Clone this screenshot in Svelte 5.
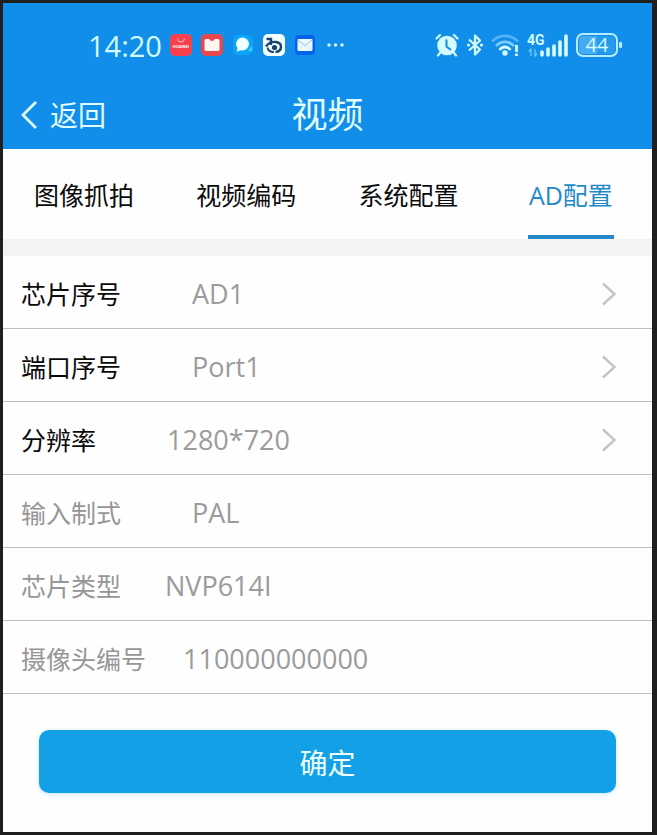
<script>
  const tabs = ['图像抓拍', '视频编码', '系统配置', 'AD配置'];
  let active = $state('AD配置');

  const pickers = [
    { label: '芯片序号', value: 'AD1', gap: 'wide' },
    { label: '端口序号', value: 'Port1', gap: 'wide' },
    { label: '分辨率', value: '1280*720', gap: 'wide' },
  ];
  const fields = [
    { id: 'format', label: '输入制式', value: 'PAL', gap: 'wide' },
    { id: 'chip', label: '芯片类型', value: 'NVP614I', gap: 'medium' },
    { id: 'camera', label: '摄像头编号', value: '110000000000', gap: 'narrow' },
  ];
</script>

<div class="frame">
  <div class="screen">
    <header>
      <div class="status">
        <div class="group left">
          <span class="time">14:20</span>
          <div class="apps">
            <svg viewBox="0 0 22 22" aria-hidden="true">
              <rect width="22" height="22" rx="5" fill="#f8404c" />
              <path d="M7.5 4.5a3.5 3.5 0 0 0 7 0" fill="none" stroke="#ffc0c0" stroke-width="1" />
              <text x="11" y="13.5" text-anchor="middle" class="brand">HUAWEI</text>
            </svg>
            <svg viewBox="0 0 22 22" aria-hidden="true">
              <rect width="22" height="22" rx="5" fill="#e9474f" />
              <path d="M3.500 6.500Q3.500 5 5 5H8.200Q9 7 11 7T13.800 5H17Q18.500 5 18.500 6.500V15.500Q18.500 17 17 17H5Q3.500 17 3.500 15.500Z" fill="#fff6f2" />
            </svg>
            <svg viewBox="0 0 22 22" aria-hidden="true">
              <rect x="1" y="1" width="20" height="20" rx="5" fill="#0aa4f8" />
              <path d="M16 17l4-5v5z" fill="#48cdfc" />
              <circle cx="10.500" cy="10" r="6.500" fill="#f0ffff" />
              <path d="M6 13l-1.500 4.500 5-1.500z" fill="#f0ffff" />
            </svg>
            <svg viewBox="0 0 22 22" aria-hidden="true">
              <rect width="22" height="22" rx="5" fill="#f5ffff" />
              <path d="M3.500 5h4.500v6" fill="none" stroke="#174570" stroke-width="2.400" />
              <path d="M3 12.500C5 9.500 9 7.500 13 8C20 9 19.500 17.500 12.500 18" fill="none" stroke="#174570" stroke-width="2.400" />
              <path d="M4.500 13.500C5 16.500 7.500 18 11 18" fill="none" stroke="#174570" stroke-width="1.800" />
              <circle cx="11.500" cy="13.500" r="2.600" fill="#174570" />
            </svg>
            <svg viewBox="0 0 22 22" aria-hidden="true">
              <rect x="1" y="1" width="20" height="20" rx="4" fill="#0562ec" />
              <rect x="3.500" y="5" width="15" height="12" rx="1" fill="#ebfaff" />
              <path d="M4 6l7 5.500 7-5.500" fill="none" stroke="#8fc2ee" stroke-width="1" />
              <path d="M4.500 16.500l4-5M17.500 16.500l-4-5" fill="none" stroke="#c8e4f8" stroke-width="0.800" />
            </svg>
            <svg viewBox="0 0 22 22" aria-hidden="true" fill="#d4faff">
              <circle cx="4" cy="11" r="1.700" /><circle cx="10.500" cy="11" r="1.700" /><circle cx="17" cy="11" r="1.700" />
            </svg>
          </div>
        </div>
        <div class="group right">
          <svg width="24" height="24" viewBox="0 0 24 24" aria-label="闹钟" role="img">
            <circle cx="12" cy="12.500" r="9.800" fill="#d4fbff" />
            <path d="M1.500 5.500L5 2M22.500 5.500L19 2M5 20l-2 2.500M19 20l2 2.500" stroke="#d4fbff" stroke-width="2.200" stroke-linecap="round" />
            <path d="M11.500 6.500v7l4.500 3.500" fill="none" stroke="#118bea" stroke-width="2" />
          </svg>
          <svg width="18" height="24" viewBox="0 0 18 24" aria-label="蓝牙" role="img" fill="none" stroke="#d4fbff" stroke-width="2.200">
            <path d="M3 6.500l11 10-5 5V2.500l5 5-11 10" stroke-linejoin="round" />
            <circle cx="2.500" cy="12" r="1.600" fill="#d4fbff" stroke="none" />
            <circle cx="15.500" cy="12" r="1.600" fill="#d4fbff" stroke="none" />
          </svg>
          <svg width="29" height="24" viewBox="0 0 29 24" aria-label="无线网络" role="img" fill="none" stroke-width="2.800">
            <path d="M1 8.500C8 1 20 1 27 8.500" stroke="#53b4f6" />
            <path d="M5 13C10 7.500 18 7.500 23 13" stroke="#7bcdfa" />
            <path d="M8.500 17C11.500 13 16.500 13 19.500 17" stroke="#d4fbff" />
            <circle cx="14" cy="20" r="2.700" fill="#d4fbff" stroke="none" />
            <path d="M25.500 12v7M25.500 20.500v2.500" stroke="#d4fbff" />
          </svg>
          <svg width="42" height="26" viewBox="0 0 42 26" aria-label="移动信号" role="img">
            <text x="0" y="13" class="net">4G</text>
            <path d="M4 24v-7l-2 2.500M8 17v7l2-2.500" fill="none" stroke="#70c7fa" stroke-width="1.300" />
            <path d="M15 23v-3M21 23v-6M27 23v-9M33 23V10M39 23V4" stroke="#d4fbff" stroke-width="3.600" stroke-linecap="round" />
          </svg>
          <div class="battery"><span>44</span></div>
        </div>
      </div>
      <nav class="title">
        <a class="back" href="#back">
          <svg width="18" height="30" viewBox="0 0 18 30" aria-hidden="true">
            <path d="M16 2L3 15l13 13" fill="none" stroke="#e0fdff" stroke-width="2.800" />
          </svg>
          返回
        </a>
        <h1>视频</h1>
      </nav>
    </header>

    <div class="tabs" role="tablist">
      {#each tabs as tab}
        <button role="tab" aria-selected={active === tab} class:active={active === tab} onclick={() => (active = tab)}>
          <span>{tab}</span>
        </button>
      {/each}
    </div>

    <form onsubmit={(e) => e.preventDefault()}>
      {#each pickers as row}
        <button type="button" class="row {row.gap}">
          <span class="name">{row.label}</span>
          <span class="value">{row.value}</span>
          <svg width="16" height="24" viewBox="0 0 16 24" aria-hidden="true">
            <path d="M2 1.500L13.500 12L2 22.500" fill="none" stroke="#c4c4c4" stroke-width="2.400" />
          </svg>
        </button>
      {/each}
      {#each fields as row}
        <div class="row fixed {row.gap}">
          <label class="name" for={row.id}>{row.label}</label>
          <input class="value" id={row.id} value={row.value} readonly />
        </div>
      {/each}
      <button type="submit" class="submit">确定</button>
    </form>
  </div>
</div>

<style>
  :global(body) {
    margin: 0;
    background: #1f1f1f;
  }
  .frame {
    box-sizing: border-box;
    min-height: 100vh;
    padding: 3px 5px 3px 3px;
    display: flex;
    font-family: 'Open Sans', 'Noto Sans CJK SC', sans-serif;
  }
  .screen {
    flex: 1;
    min-width: 0;
    background: #fefefe;
  }
  button,
  input {
    font-family: inherit;
    border: 0;
    margin: 0;
    padding: 0;
    background: none;
    border-radius: 0;
  }
  header {
    background: #118dea;
    color: #e0fdff;
    padding-top: 20px;
  }
  .status {
    display: flex;
    justify-content: space-between;
    align-items: center;
    height: 44px;
    padding: 0 34px 0 85px;
  }
  .group {
    display: flex;
    align-items: center;
  }
  .left {
    gap: 8px;
  }
  .right {
    gap: 7px;
  }
  .time {
    font-size: 29px;
    line-height: 44px;
    padding-top: 2px;
    color: #d4fbff;
  }
  .apps {
    display: flex;
    gap: 9px;
  }
  .apps svg {
    width: 22px;
    height: 22px;
  }
  .brand {
    font-size: 4px;
    font-weight: 700;
    fill: #fff;
  }
  .net {
    font-family: Roboto, sans-serif;
    font-size: 14px;
    font-weight: 700;
    fill: #d4fbff;
  }
  .battery {
    position: relative;
    box-sizing: border-box;
    width: 42px;
    height: 24px;
    border: 2px solid #b5edff;
    border-radius: 7px;
    background: linear-gradient(90deg, #45abf2 50%, #259bee 50%);
    background-clip: content-box;
    padding: 1px;
    text-align: center;
    font-size: 20px;
    line-height: 18px;
    color: #d4fbff;
  }
  .battery::after {
    content: '';
    position: absolute;
    right: -6px;
    top: 7px;
    width: 3px;
    height: 6px;
    background: #b5edff;
    border-radius: 1px;
  }
  .title {
    display: grid;
    grid-template-columns: 1fr auto 1fr;
    align-items: center;
    height: 82px;
    padding: 14px 17px 0;
    box-sizing: border-box;
  }
  .back {
    display: flex;
    align-items: center;
    gap: 12px;
    color: inherit;
    text-decoration: none;
    font-size: 28px;
    line-height: 40px;
  }
  h1 {
    margin: 0;
    font-size: 36px;
    line-height: 48px;
    font-weight: 400;
  }
  .tabs {
    display: grid;
    grid-template-columns: repeat(4, 1fr);
    border-bottom: 17px solid #f3f3f3;
  }
  .tabs button {
    display: flex;
    justify-content: center;
    font-size: 25px;
    color: #0a0a0a;
  }
  .tabs span {
    box-sizing: border-box;
    height: 90px;
    line-height: 92px;
    padding: 0 1px;
    border-bottom: 4px solid transparent;
  }
  .tabs .active {
    color: #2389c8;
  }
  .tabs .active span {
    border-color: #2389c8;
  }
  .row {
    box-sizing: border-box;
    display: flex;
    align-items: center;
    width: 100%;
    height: 73px;
    padding: 3px 35px 0 18px;
    border-bottom: 1px solid #bfbfbf;
    text-align: left;
    color: #0a0a0a;
  }
  .wide {
    gap: 71px;
  }
  .medium {
    gap: 44px;
  }
  .narrow {
    gap: 37px;
  }
  .name {
    flex: none;
    font-size: 25px;
    line-height: 40px;
  }
  .value {
    flex: 1;
    min-width: 0;
    font-size: 27px;
    line-height: 40px;
    color: #9b9b9b;
  }
  .fixed .name {
    color: #969696;
  }
  .submit {
    display: block;
    width: calc(100% - 72px);
    height: 63px;
    margin: 36px 36px 39px;
    padding-top: 3px;
    border-radius: 10px;
    background: #14a0e6;
    box-shadow: 0 1px 4px #bfeafa;
    color: #eafdff;
    font-size: 28px;
    line-height: 60px;
  }
</style>
